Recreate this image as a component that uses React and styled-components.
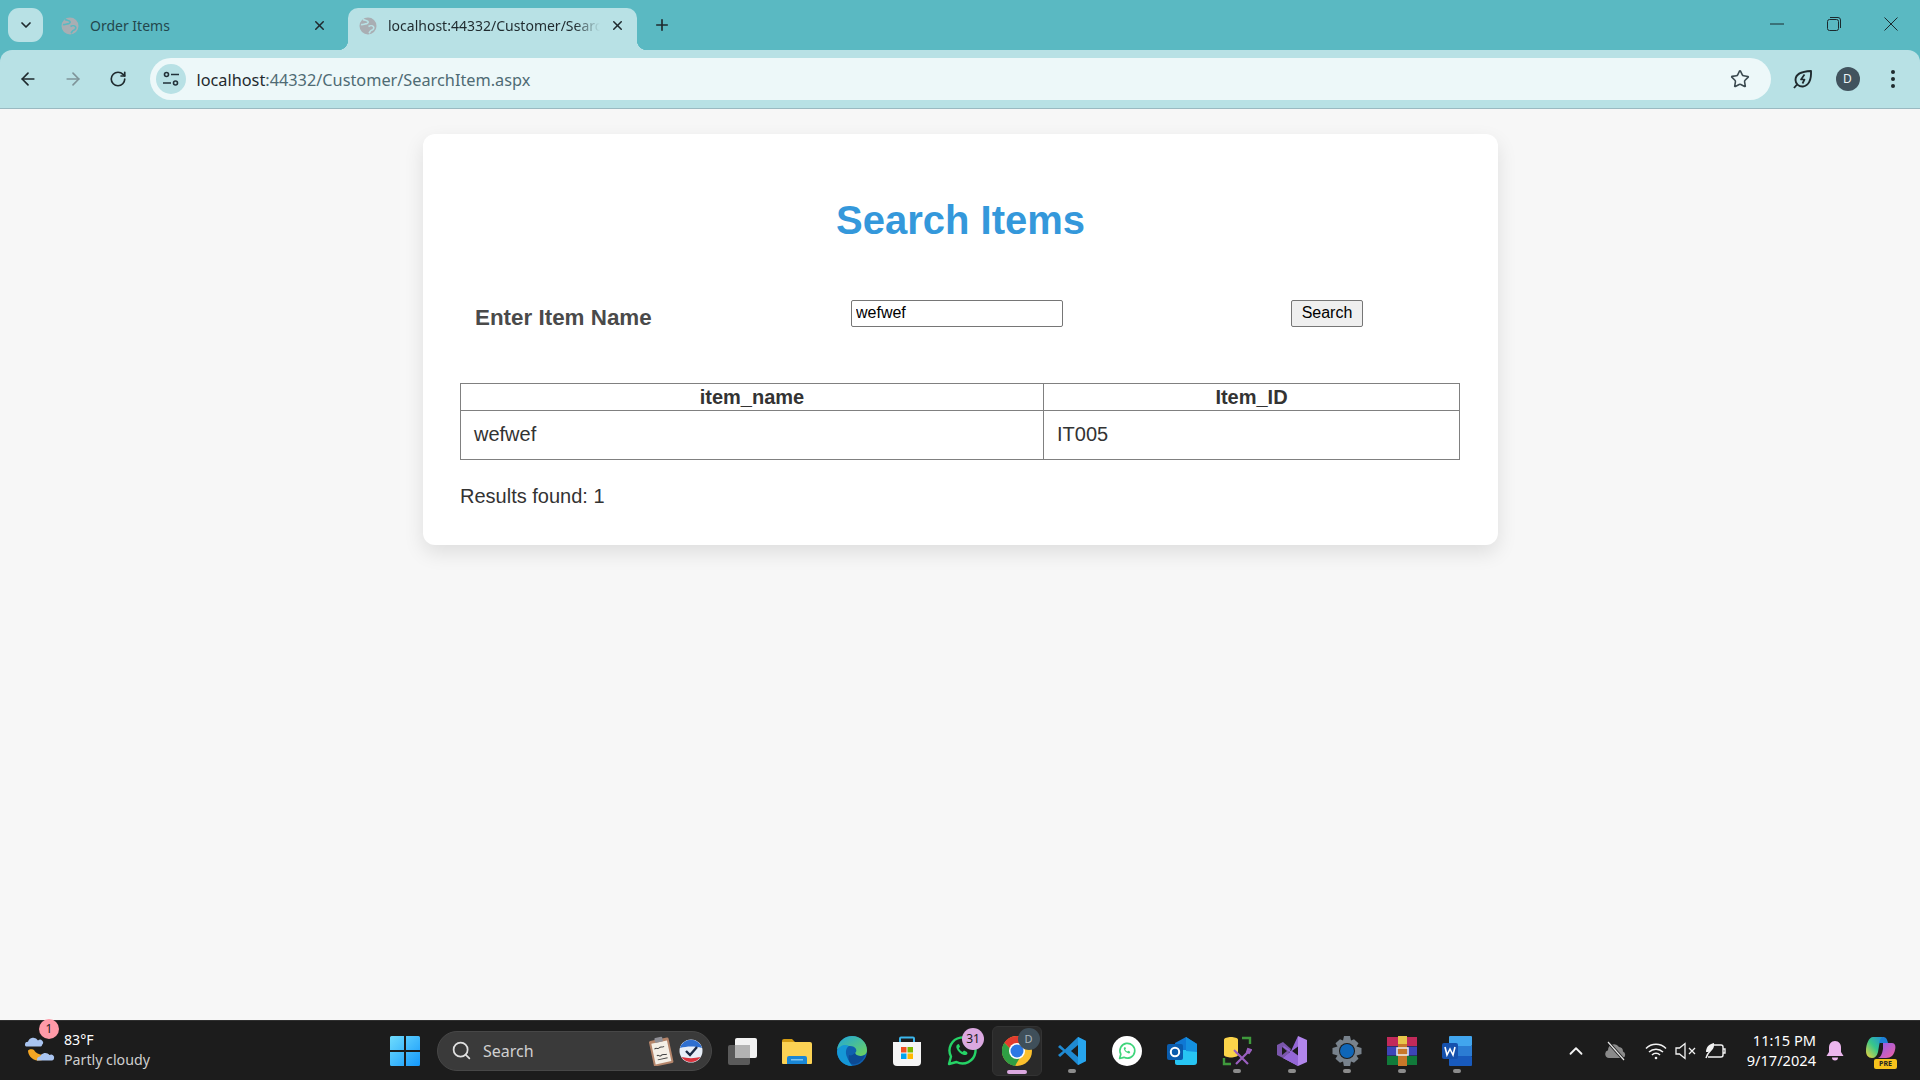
import styled, { createGlobalStyle } from "styled-components";
import { ArrowLeft, ArrowRight, RotateCw, Star, X, Plus, ChevronDown, ChevronUp, Search as SearchGlyph } from "lucide-react";

const GlobalStyle = createGlobalStyle`
    html, body {
        margin: 0;
        padding: 0;
        overflow: hidden;
    }
    * {
        box-sizing: border-box;
    }
`;

const UI_FONT = `"Noto Sans", "Open Sans", sans-serif`;

const Screen = styled.div`
    width: 1920px;
    height: 1080px;
    display: flex;
    flex-direction: column;
    background-color: #5ab9c2;
    font-family: "Liberation Sans", Arial, sans-serif;
`;

/* browser chrome */
const TabStrip = styled.div`
    height: 50px;
    display: flex;
    align-items: flex-end;
    padding-left: 8px;
    flex-shrink: 0;
`;

const TabSearch = styled.div`
    width: 35px;
    height: 34px;
    margin: 0 7px 8px 0;
    border-radius: 11px;
    background-color: #b8e1e5;
    display: flex;
    align-items: center;
    justify-content: center;
    color: #1f2a2e;
`;

const Tab = styled.div`
    position: relative;
    width: 289px;
    height: 42px;
    margin-right: 9px;
    padding: 0 11px 7px 11px;
    display: flex;
    align-items: center;
    border-radius: 10px 10px 0 0;
    background-color: ${(p) => (p.$active ? "#b8e1e5" : "transparent")};
    font-family: ${UI_FONT};
    font-size: 14px;
    color: ${(p) => (p.$active ? "#1f2a2e" : "#23474d")};

    ${(p) => p.$active && `
    &::before, &::after {
        content: "";
        position: absolute;
        bottom: 0;
        width: 10px;
        height: 10px;
    }
    &::before {
        left: -10px;
        background: radial-gradient(circle at 0 0, transparent 10px, #b8e1e5 10.5px);
    }
    &::after {
        right: -10px;
        background: radial-gradient(circle at 100% 0, transparent 10px, #b8e1e5 10.5px);
    }`}
`;

const TabTitle = styled.span`
    flex: 1;
    margin-left: 11px;
    white-space: nowrap;
    overflow: hidden;
    mask-image: ${(p) => (p.$fade ? "linear-gradient(to right, #000 88%, transparent 100%)" : "none")};
`;

const TabClose = styled.span`
    width: 18px;
    height: 18px;
    margin-left: 8px;
    display: flex;
    align-items: center;
    justify-content: center;
    color: #1f2a2e;
`;

const NewTab = styled.div`
    width: 30px;
    height: 30px;
    margin: 0 0 10px 1px;
    display: flex;
    align-items: center;
    justify-content: center;
    color: #1f2a2e;
`;

const WindowButtons = styled.div`
    margin-left: auto;
    padding-right: 1px;
    align-self: flex-start;
    display: flex;
    color: #1b2a2e;
`;

const WindowButton = styled.div`
    width: 57px;
    height: 48px;
    display: flex;
    align-items: center;
    justify-content: center;
`;

const Toolbar = styled.div`
    height: 59px;
    flex-shrink: 0;
    padding: 0 5px 1px 5.5px;
    display: flex;
    align-items: center;
    background-color: #b8e1e5;
    border-bottom: 1px solid #9ab9c1;
    border-radius: 12px 12px 0 0;
`;

const ToolButton = styled.div`
    width: 45px;
    height: 42px;
    display: flex;
    align-items: center;
    justify-content: center;
    color: ${(p) => (p.$dim ? "#7f9499" : "#1f2a2e")};
`;

const Omnibox = styled.div`
    flex: 1;
    height: 42px;
    margin: 0 9px;
    padding: 0 21px 0 6px;
    display: flex;
    align-items: center;
    border-radius: 21px;
    background-color: #edf8f9;
`;

const SiteInfo = styled.div`
    width: 30px;
    height: 30px;
    border-radius: 50%;
    background-color: #b8e1e5;
    display: flex;
    align-items: center;
    justify-content: center;
`;

const Url = styled.div`
    flex: 1;
    margin-left: 11px;
    padding-top: 2px;
    font-family: ${UI_FONT};
    font-size: 16.3px;
    color: #4f6b74;

    b {
        font-weight: 400;
        color: #1f2a2e;
    }
`;

const Avatar = styled.div`
    width: 24px;
    height: 24px;
    border-radius: 50%;
    background-color: #41535e;
    color: #eef3f5;
    font-family: ${UI_FONT};
    font-size: 12px;
    display: flex;
    align-items: center;
    justify-content: center;
`;

/* page */
const Page = styled.main`
    flex: 1;
    padding-top: 25px;
    background-color: #f7f7f7;
`;

const Card = styled.section`
    width: 1075px;
    margin-left: 423px;
    padding: 37px;
    background-color: #fff;
    border-radius: 12px;
    box-shadow: 0 8px 20px rgba(0, 0, 0, 0.1);
`;

const Title = styled.h1`
    margin: 26px 0 0;
    text-align: center;
    font-size: 40px;
    line-height: 46px;
    font-weight: 700;
    color: #3498db;
`;

const SearchForm = styled.div`
    margin-top: 57px;
    padding-left: 15px;
    display: grid;
    grid-template-columns: 376px 440px auto;
    align-items: start;
`;

const Label = styled.label`
    padding-top: 5px;
    font-size: 22.4px;
    line-height: 26px;
    font-weight: 700;
    color: #4a4a4a;
`;

const TextInput = styled.input`
    display: block;
    width: 212px;
    height: 27px;
    padding: 0 4px 2px;
    font-family: "Liberation Sans", Arial, sans-serif;
    font-size: 16px;
    color: #000;
    background: #fff;
    border: 1px solid #767676;
    border-radius: 2px;
    outline: none;
`;

const SearchButton = styled.button`
    display: block;
    width: 72px;
    height: 27px;
    padding: 0 0 2px;
    font-family: "Liberation Sans", Arial, sans-serif;
    font-size: 16px;
    color: #000;
    background-color: #efefef;
    border: 1px solid #767676;
    border-radius: 2px;
`;

const Results = styled.table`
    width: 1000px;
    margin-top: 52px;
    table-layout: fixed;
    border-collapse: collapse;
    font-size: 20px;
    color: #333;

    th, td {
        border: 1px solid #808080;
    }
    th {
        height: 27px;
        padding: 0;
        font-weight: 700;
        line-height: 23px;
    }
    td {
        height: 49px;
        padding: 0 13px 2px;
        line-height: 23px;
    }
`;

const ResultCount = styled.p`
    margin: 25px 0 0;
    font-size: 20px;
    line-height: 23px;
    color: #333;
`;

/* taskbar */
const Taskbar = styled.footer`
    height: 60px;
    flex-shrink: 0;
    display: flex;
    align-items: center;
    background-color: #1c1c1c;
    border-top: 1px solid #2f2f2f;
    font-family: ${UI_FONT};
`;

const Weather = styled.div`
    position: relative;
    width: 390px;
    padding-left: 25px;
    display: flex;
    align-items: center;
    gap: 9px;
`;

const WeatherBadge = styled.span`
    position: absolute;
    left: 39px;
    top: -13px;
    width: 20px;
    height: 20px;
    border-radius: 50%;
    background-color: #ff9aa8;
    color: #2a1c1e;
    font-size: 12px;
    line-height: 20px;
    text-align: center;
`;

const TwoLines = styled.div`
    margin-top: -2px;
    font-size: ${(p) => (p.$right ? "14.6px" : "14.2px")};
    line-height: 20px;
    color: #fff;
    white-space: nowrap;
    text-align: ${(p) => (p.$right ? "right" : "left")};
`;

const MutedLine = styled.div`
    color: #cfcfcf;
`;

const TaskSearch = styled.div`
    width: 275px;
    height: 40px;
    margin: 0 2px 0 17px;
    padding: 0 8px 0 13px;
    display: flex;
    align-items: center;
    border-radius: 20px;
    background-color: #3a3a3a;
    border: 1px solid #474747;
    color: #d0d0d0;
    font-size: 16px;

    span {
        flex: 1;
        margin-left: 11px;
    }
`;

const AppSlot = styled.div`
    position: relative;
    width: ${(p) => (p.$focused ? "50px" : "55px")};
    height: 50px;
    margin: ${(p) => (p.$focused ? "0 2.5px" : "0")};
    display: flex;
    align-items: center;
    justify-content: center;
    border-radius: 6px;
    background-color: ${(p) => (p.$focused ? "#2a2a2a" : "transparent")};
    border: 1px solid ${(p) => (p.$focused ? "#333" : "transparent")};

    ${(p) => p.$open && `
    &::after {
        content: "";
        position: absolute;
        left: 50%;
        bottom: ${p.$focused ? "1px" : "2px"};
        width: ${p.$focused ? "20px" : "8px"};
        height: 4px;
        margin-left: ${p.$focused ? "-10px" : "-4px"};
        border-radius: 2px;
        background-color: ${p.$focused ? "#dba8e0" : "#8c8c8c"};
    }`}
`;

const CountBadge = styled.span`
    position: absolute;
    top: 1px;
    right: ${(p) => (p.$dark ? "1px" : "4px")};
    width: 22px;
    height: 22px;
    border-radius: 50%;
    background-color: ${(p) => (p.$dark ? "#3f4f5a" : "#dba8e0")};
    color: ${(p) => (p.$dark ? "#aab4ba" : "#1c1c1c")};
    font-size: ${(p) => (p.$dark ? "11px" : "12px")};
    line-height: 22px;
    text-align: center;
`;

const Tray = styled.div`
    margin-left: 76px;
    display: flex;
    align-items: center;
`;

const TrayIcon = styled.div`
    width: ${(p) => p.$w}px;
    display: flex;
    align-items: center;
    justify-content: ${(p) => (p.$end ? "flex-end" : "center")};
    color: #f2f2f2;
`;

const Copilot = styled.div`
    position: relative;
    width: 30px;
    height: 30px;
    margin-left: 12px;
`;

const PreTag = styled.span`
    position: absolute;
    right: -1px;
    bottom: -3px;
    width: 23px;
    height: 10px;
    border-radius: 2px;
    background-color: #f6c21c;
    color: #222;
    font-size: 7px;
    font-weight: 700;
    line-height: 10px;
    text-align: center;
`;

function Globe({ cut }) {
    return (
        <svg width="18" height="18" viewBox="0 0 18 18">
            <circle cx="9" cy="9" r="8.5" fill="#a9aeb3" />
            <path d="M4 2.5c2 1 4 .6 5 2 .8 1.2-1 2.2-2.6 2.4C5 7.1 3.6 8 2 7.5M9.5 9.5c1.5-1 4-1 5 .2 1 1.3-.5 3.3-2 3.6-1.3.3-1.5 1.7-2.5 3" fill="none" stroke={cut} strokeWidth="1.6" />
        </svg>
    );
}

function SiteIcon() {
    return (
        <svg width="18" height="18" viewBox="0 0 18 18" fill="none" stroke="#22323a" strokeWidth="1.6">
            <circle cx="4.5" cy="4.5" r="2" />
            <path d="M9 4.5h8M1 13h8" />
            <circle cx="13.5" cy="13" r="2" />
        </svg>
    );
}

function LeafBolt() {
    return (
        <svg width="20" height="20" viewBox="0 0 20 20" fill="none" stroke="#1f2a2e" strokeWidth="1.9" strokeLinejoin="round">
            <path d="M2.5 11c0-5 4-8.5 15.5-9 .5 9-2.5 15-8 15.5-4 .3-7.5-2.5-7.5-6.5z" />
            <path d="M1 19l3-3.5" />
            <path d="M11.5 5.5L8 10.5h3.5L9.500 14.5" strokeWidth="1.7" />
        </svg>
    );
}

function Dots() {
    return (
        <svg width="6" height="20" viewBox="0 0 6 20" fill="#1f2a2e">
            <circle cx="3" cy="3" r="2" />
            <circle cx="3" cy="10" r="2" />
            <circle cx="3" cy="17" r="2" />
        </svg>
    );
}

function WeatherIcon() {
    return (
        <svg width="30" height="30" viewBox="0 0 30 30">
            <path d="M3 15c1 10 14 13 20 5 1-1 1-2 0-2-6 2-12 0-14-4-1-1-6-1-6 1z" fill="#f5a623" />
            <path d="M0 9a3 3 0 0 1 3-3.200A5.500 5.500 0 0 1 13 4.500 3 3 0 0 1 17 9c0 1-1 1.500-2 1.500H2c-1 0-2-.5-2-1.500z" fill="#a9c4f0" />
            <path d="M12 24a3 3 0 0 1 3-3.400 5.500 5.500 0 0 1 9.500-1.500 3 3 0 0 1 4.500 3.500c0 1-1 1.900-2 1.900H14c-1 0-2 .5-2-.5z" fill="#a9c4f0" />
        </svg>
    );
}

function WindowsLogo() {
    return (
        <svg width="30" height="30" viewBox="0 0 30 30">
            <defs>
                <linearGradient id="winBlue" x1="0" y1="0" x2="1" y2="1">
                    <stop offset="0" stopColor="#6fdcfd" />
                    <stop offset="1" stopColor="#1498fb" />
                </linearGradient>
            </defs>
            <path d="M0 1.5A1.5 1.5 0 0 1 1.5 0H14v14H0zM16 0h12.5A1.5 1.5 0 0 1 30 1.5V14H16zM0 16h14v14H1.5A1.5 1.5 0 0 1 0 28.500zM16 16h14v12.500a1.5 1.5 0 0 1-1.5 1.5H16z" fill="url(#winBlue)" />
        </svg>
    );
}

function Clipboard() {
    return (
        <svg width="30" height="30" viewBox="0 0 30 30">
            <g transform="translate(-1 0) rotate(-12 13 15)">
                <rect x="3" y="3" width="20" height="26" rx="1.5" fill="#b5856a" />
                <rect x="5" y="6" width="16" height="21" fill="#f4efe6" />
                <rect x="9" y="1" width="8" height="5" rx="1" fill="#8f8f96" />
                <path d="M7 12c2-2 3 1 5-.5s3 1 5-.5M8 19c2-2 2 2 4 .5s3 0 6 0M8 23h10" fill="none" stroke="#444" strokeWidth="1" />
            </g>
        </svg>
    );
}

function VoteBadge() {
    return (
        <svg width="24" height="24" viewBox="0 0 24 24">
            <circle cx="12" cy="12" r="11.5" fill="#e8eef8" />
            <path d="M1 9a11.5 11.5 0 0 1 22 0c-7-2-15-2-22 0z" fill="#2f6fd0" />
            <path d="M2.5 18a11.5 11.5 0 0 0 19 0c-6 1.5-13 1.5-19 0z" fill="#d9323c" />
            <path d="M7 12l4 4 7-8" fill="none" stroke="#1c2a44" strokeWidth="2.4" />
        </svg>
    );
}

function TaskView() {
    return (
        <svg width="30" height="30" viewBox="0 0 30 30">
            <rect x="1" y="9" width="22" height="20" rx="2" fill="#5a5a5a" />
            <rect x="8" y="2" width="22" height="20" rx="2" fill="#f2f2f2" />
            <rect x="8" y="9" width="15" height="13" fill="#b3b3b3" />
        </svg>
    );
}

function FolderIcon() {
    return (
        <svg width="30" height="30" viewBox="0 0 30 30">
            <path d="M0 5a2 2 0 0 1 2-2h8l3 3h-13z" fill="#d49c12" />
            <path d="M0 6h28a2 2 0 0 1 2 2v19a1 1 0 0 1-1 1H1a1 1 0 0 1-1-1z" fill="#fbd254" />
            <path d="M5 22a2 2 0 0 1 2-2h16a2 2 0 0 1 2 2v6H5z" fill="#1a87d6" />
            <rect x="9" y="23" width="12" height="1.5" fill="#7cc4f2" />
        </svg>
    );
}

function EdgeIcon() {
    return (
        <svg width="30" height="30" viewBox="0 0 30 30">
            <defs>
                <linearGradient id="edgeTop" x1="0" y1="0" x2="1" y2="1">
                    <stop offset="0" stopColor="#1fa6dc" />
                    <stop offset="1" stopColor="#6fd35a" />
                </linearGradient>
            </defs>
            <circle cx="15" cy="15" r="15" fill="#0f5fae" />
            <path d="M0 14C1 5 8 0 15 0c9 0 15 7 15 14 0 4-3 6-7 6-3 0-5-1-5-3 3-2 1-7-5-7C7 10 1 12 0 14z" fill="url(#edgeTop)" />
            <path d="M0 15C2 9 9 8 12 10c-3 2-4 6-2 11 1 3 4 7 5 9C6 30 0 23 0 15z" fill="#1597d6" />
            <path d="M18 17c1 3 6 4 10 2-2 6-8 10-13 9-3-1-4-5-3-9 2 1 4 0 6-2z" fill="#0c4a94" />
        </svg>
    );
}

function StoreIcon() {
    return (
        <svg width="30" height="30" viewBox="0 0 30 30">
            <path d="M8 7V2.5a1 1 0 0 1 1-1h12a1 1 0 0 1 1 1V7" fill="none" stroke="#3bb6ec" strokeWidth="2" />
            <path d="M1 6h28v20a4 4 0 0 1-4 4H5a4 4 0 0 1-4-4z" fill="#f5f5f5" />
            <rect x="9" y="11" width="5.5" height="5.5" fill="#f25022" />
            <rect x="15.5" y="11" width="5.5" height="5.5" fill="#7fba00" />
            <rect x="9" y="17.5" width="5.5" height="5.5" fill="#00a4ef" />
            <rect x="15.5" y="17.5" width="5.5" height="5.5" fill="#ffb900" />
        </svg>
    );
}

function PhonePath({ color }) {
    return <path d="M10.5 8.5c-1 .5-1.5 2-1 3.5 1 3 4 6 7.5 7 1.5.4 3-.3 3.5-1.5l-.5-1.5-3-1.5-1.5 1.5c-1.5-.7-3-2.200-3.700-3.700l1.300-1.5-1.200-2.800z" fill={color} />;
}

function WhatsAppIcon() {
    return (
        <svg width="30" height="30" viewBox="0 0 30 30">
            <path d="M2 28l2-7.5A13 13 0 1 1 9.5 26z" fill="none" stroke="#25d366" strokeWidth="2.4" strokeLinejoin="round" />
            <PhonePath color="#25d366" />
        </svg>
    );
}

function WhatsAppWhite() {
    return (
        <svg width="30" height="30" viewBox="0 0 30 30">
            <circle cx="15" cy="15" r="15" fill="#fff" />
            <g transform="translate(6.5 6.5) scale(.57)">
                <path d="M2 28l2-7.5A13 13 0 1 1 9.5 26z" fill="none" stroke="#3fd57b" strokeWidth="3" strokeLinejoin="round" />
                <PhonePath color="#3fd57b" />
            </g>
        </svg>
    );
}

function ChromeIcon() {
    return (
        <svg width="30" height="30" viewBox="0 0 30 30">
            <circle cx="15" cy="15" r="15" fill="#fbc02d" />
            <path d="M15 0a15 15 0 0 1 13 7.5H15a7.5 7.5 0 0 0-7 5L2.3 6.8A15 15 0 0 1 15 0z" fill="#e33b2e" />
            <path d="M2.3 6.8A15 15 0 0 0 13 29.9l5.6-9.4A7.5 7.5 0 0 1 8 12.5z" fill="#2f9e44" />
            <circle cx="15" cy="15" r="8" fill="#fff" />
            <circle cx="15" cy="15" r="6.5" fill="#2b78e4" />
        </svg>
    );
}

function VsCodeIcon() {
    return (
        <svg width="30" height="30" viewBox="0 0 30 30">
            <path d="M21 1l8 4v20l-8 4-13-12.5L3 21 1 19l5-4-5-4 2-2 5 4.5z" fill="#1f8ad2" />
            <path d="M21 1l8 4v20l-8 4z" fill="#27a5ee" />
            <path d="M21 9l-7 6 7 6z" fill="#1c1c1c" />
        </svg>
    );
}

function OutlookIcon() {
    return (
        <svg width="30" height="30" viewBox="0 0 30 30">
            <path d="M8 7l11-6 11 7v8H8z" fill="#0f78d4" />
            <path d="M8 14h22v12a3 3 0 0 1-3 3H10a2 2 0 0 1-2-2z" fill="#27c5f3" />
            <path d="M19 1l11 7v8l-11-1z" fill="#1490df" />
            <rect x="0" y="8" width="16" height="16" rx="2" fill="#0a5cad" />
            <circle cx="8" cy="16" r="4.2" fill="none" stroke="#fff" strokeWidth="2" />
        </svg>
    );
}

function ToolIcon() {
    return (
        <svg width="30" height="30" viewBox="0 0 30 30">
            <path d="M2 3.5C2 2 6 1 9 1s7 1 7 2.5V19c0 1.5-4 2.5-7 2.5S2 20.5 2 19z" fill="#fbd44a" />
            <path d="M20 2h8v6M2 22v6h7" fill="none" stroke="#3f9a3c" strokeWidth="2.4" />
            <path d="M14 16l12 12M27 15l-13 13" fill="none" stroke="#9a5fc0" strokeWidth="2.2" />
            <path d="M12 14l3 3M26 13l3 1-2 3-2-1z" fill="none" stroke="#9a5fc0" strokeWidth="2" />
        </svg>
    );
}

function VsIcon() {
    return (
        <svg width="30" height="30" viewBox="0 0 30 30">
            <path d="M0 9l6-3 8 7-3 5-5 4-6-3z" fill="#7a56ab" />
            <path d="M21 0l9 4v22l-9 4-15-8 15-11.5z" fill="#b286ec" />
            <path d="M21 0v30L6 22l7-6-7-5 1-1 7 5z" fill="#9467d6" />
            <path d="M5 11l5 4-5 4z" fill="#1c1c1c" />
            <path d="M21 10.5L15 15l6 4.5z" fill="#1c1c1c" />
        </svg>
    );
}

function GearIcon() {
    return (
        <svg width="30" height="30" viewBox="0 0 30 30">
            <path d="M12 0h6l1 4.5 3-1.300 4.500 4-2 3.300 5 1.500v6l-5 1.500 2 3.300-4.500 4-3-1.300-1 5h-6l-1-5-3 1.300-4.500-4 2-3.300-5-1.500v-6l5-1.500-2-3.300 4.500-4 3 1.300z" fill="#78828c" />
            <circle cx="15" cy="15" r="8" fill="#1c1c1c" />
            <circle cx="15" cy="15" r="7" fill="#0f66b8" />
        </svg>
    );
}

function RarIcon() {
    return (
        <svg width="30" height="30" viewBox="0 0 30 30">
            <rect x="0" y="1" width="30" height="9" fill="#c22a5a" />
            <rect x="0" y="10.5" width="30" height="9" fill="#3d45b8" />
            <rect x="0" y="20" width="30" height="9" fill="#117a3a" />
            <rect x="11" y="0" width="9" height="30" fill="#c8782a" />
            <rect x="11" y="0" width="9" height="8" fill="#e8c64a" />
            <rect x="10" y="12" width="11" height="7" fill="none" stroke="#eee" strokeWidth="1.5" />
        </svg>
    );
}

function WordIcon() {
    return (
        <svg width="30" height="30" viewBox="0 0 30 30">
            <rect x="7" y="0" width="23" height="10" rx="1" fill="#41a5ee" />
            <rect x="7" y="10" width="23" height="10" fill="#2b7cd3" />
            <rect x="7" y="20" width="23" height="10" rx="1" fill="#185abd" />
            <rect x="0" y="7" width="16" height="16" rx="2" fill="#1551ad" />
            <path d="M3 11l2 8 3-6 3 6 2-8" fill="none" stroke="#fff" strokeWidth="1.6" />
        </svg>
    );
}

function CloudOff() {
    return (
        <svg width="22" height="20" viewBox="0 0 22 20">
            <path d="M4 17a4 4 0 0 1-1-7.800A6 6 0 0 1 14 6a4.500 4.500 0 0 1 4 4.500 3.500 3.500 0 0 1 0 6.500z" fill="#8a8a8a" />
            <path d="M3 1l16 18" stroke="#1c1c1c" strokeWidth="3" />
            <path d="M3 1l16 18" stroke="#e8e8e8" strokeWidth="1.2" />
        </svg>
    );
}

function WifiIcon() {
    return (
        <svg width="22" height="18" viewBox="0 0 22 18" fill="none" stroke="#f2f2f2" strokeWidth="1.5">
            <path d="M1 6.5a14 14 0 0 1 20 0M4 10a10 10 0 0 1 14 0M7 13a5.5 5.5 0 0 1 8 0" />
            <circle cx="11" cy="16" r="1.3" fill="#f2f2f2" stroke="none" />
        </svg>
    );
}

function MuteIcon() {
    return (
        <svg width="22" height="18" viewBox="0 0 22 18" fill="none" stroke="#f2f2f2" strokeWidth="1.3">
            <path d="M1 6h3.5L10 1.5v15L4.5 12H1z" />
            <path d="M14 6l6 6M20 6l-6 6" />
        </svg>
    );
}

function BatteryLeaf() {
    return (
        <svg width="22" height="20" viewBox="0 0 22 20" fill="none" stroke="#f2f2f2" strokeWidth="1.4">
            <path d="M8 4h8a2 2 0 0 1 2 2v8a2 2 0 0 1-2 2H3" />
            <path d="M18 8h2v4h-2" />
            <path d="M1 11c0-5 3-8 8-9 .5 5-1.5 8-6 9z" fill="#f2f2f2" stroke="none" />
            <path d="M1 17c1-4 3-6 5-8" />
        </svg>
    );
}

function Bell() {
    return (
        <svg width="18" height="20" viewBox="0 0 18 20" fill="#ecb6ee">
            <path d="M9 0c4 0 6 3 6 6.5V11l2.5 4H.5L3 11V6.5C3 3 5 0 9 0z" />
            <path d="M6 16.5h6a3 3 0 0 1-6 0z" />
        </svg>
    );
}

function CopilotIcon() {
    return (
        <svg width="30" height="24" viewBox="0 0 30 24">
            <defs>
                <linearGradient id="copA" x1="0" y1="1" x2="1" y2="0">
                    <stop offset="0" stopColor="#f5d33a" />
                    <stop offset=".5" stopColor="#37c78a" />
                    <stop offset="1" stopColor="#1f8be0" />
                </linearGradient>
                <linearGradient id="copB" x1="0" y1="0" x2="1" y2="1">
                    <stop offset="0" stopColor="#8b5cf0" />
                    <stop offset="1" stopColor="#f060a0" />
                </linearGradient>
            </defs>
            <path d="M7 1h11c-3 1-4 4-5 9l-1 6c-1 4-3 6-6 6-4 0-6-3-6-7C0 8 3 1 7 1z" fill="url(#copA)" />
            <path d="M17 1c3 0 4 2 5 6H13c1-3 2-6 4-6z" fill="#1c7fd8" />
            <path d="M17 7h9c3 0 4 3 3 7-1 5-4 8-9 8h-8c3-1 4-4 5-9z" fill="url(#copB)" />
        </svg>
    );
}

const apps = [
    { key: "taskview", icon: <TaskView /> },
    { key: "files", icon: <FolderIcon /> },
    { key: "edge", icon: <EdgeIcon /> },
    { key: "store", icon: <StoreIcon /> },
    { key: "whatsapp", icon: <WhatsAppIcon />, badge: "31" },
    { key: "chrome", icon: <ChromeIcon />, badge: "D", dark: true, open: true, focused: true },
    { key: "vscode", icon: <VsCodeIcon />, open: true },
    { key: "whatsapp2", icon: <WhatsAppWhite /> },
    { key: "outlook", icon: <OutlookIcon /> },
    { key: "tools", icon: <ToolIcon />, open: true },
    { key: "vs", icon: <VsIcon />, open: true },
    { key: "settings", icon: <GearIcon />, open: true },
    { key: "rar", icon: <RarIcon />, open: true },
    { key: "word", icon: <WordIcon />, open: true },
];

export default function App() {
    return (
        <Screen>
            <GlobalStyle />
            <TabStrip>
                <TabSearch><ChevronDown size={16} strokeWidth={2.6} /></TabSearch>
                <Tab>
                    <Globe cut="#5ab9c2" />
                    <TabTitle>Order Items</TabTitle>
                    <TabClose><X size={15} strokeWidth={2.4} /></TabClose>
                </Tab>
                <Tab $active>
                    <Globe cut="#b8e1e5" />
                    <TabTitle $fade>localhost:44332/Customer/SearchItem.aspx</TabTitle>
                    <TabClose><X size={15} strokeWidth={2.4} /></TabClose>
                </Tab>
                <NewTab><Plus size={18} strokeWidth={2.2} /></NewTab>
                <WindowButtons>
                    <WindowButton>
                        <svg width="14" height="2" viewBox="0 0 14 2"><path d="M0 1h14" stroke="#1b2a2e" strokeWidth="1" /></svg>
                    </WindowButton>
                    <WindowButton>
                        <svg width="14" height="14" viewBox="0 0 14 14" fill="none" stroke="#1b2a2e" strokeWidth="1">
                            <rect x=".5" y="2.5" width="11" height="11" rx="2" />
                            <path d="M3 .5h8a2.5 2.5 0 0 1 2.5 2.5v8" />
                        </svg>
                    </WindowButton>
                    <WindowButton>
                        <svg width="14" height="14" viewBox="0 0 14 14"><path d="M.5.5l13 13M13.5.5l-13 13" stroke="#1b2a2e" strokeWidth="1" /></svg>
                    </WindowButton>
                </WindowButtons>
            </TabStrip>

            <Toolbar>
                <ToolButton><ArrowLeft size={20} strokeWidth={2} /></ToolButton>
                <ToolButton $dim><ArrowRight size={20} strokeWidth={2} /></ToolButton>
                <ToolButton><RotateCw size={18} strokeWidth={2.2} /></ToolButton>
                <Omnibox>
                    <SiteInfo><SiteIcon /></SiteInfo>
                    <Url><b>localhost</b>:44332/Customer/SearchItem.aspx</Url>
                    <Star size={20} strokeWidth={1.9} color="#3b4a50" />
                </Omnibox>
                <ToolButton><LeafBolt /></ToolButton>
                <ToolButton><Avatar>D</Avatar></ToolButton>
                <ToolButton><Dots /></ToolButton>
            </Toolbar>

            <Page>
                <Card>
                    <Title>Search Items</Title>
                    <SearchForm>
                        <Label>Enter Item Name</Label>
                        <div><TextInput defaultValue="wefwef" /></div>
                        <div><SearchButton>Search</SearchButton></div>
                    </SearchForm>
                    <Results>
                        <colgroup>
                            <col width="583" />
                            <col />
                        </colgroup>
                        <thead>
                            <tr>
                                <th>item_name</th>
                                <th>Item_ID</th>
                            </tr>
                        </thead>
                        <tbody>
                            <tr>
                                <td>wefwef</td>
                                <td>IT005</td>
                            </tr>
                        </tbody>
                    </Results>
                    <ResultCount>Results found: 1</ResultCount>
                </Card>
            </Page>

            <Taskbar>
                <Weather>
                    <WeatherIcon />
                    <WeatherBadge>1</WeatherBadge>
                    <TwoLines>
                        <div>83°F</div>
                        <MutedLine>Partly cloudy</MutedLine>
                    </TwoLines>
                </Weather>
                <WindowsLogo />
                <TaskSearch>
                    <SearchGlyph size={21} strokeWidth={2} color="#e0e0e0" />
                    <span>Search</span>
                    <Clipboard />
                    <VoteBadge />
                </TaskSearch>
                {apps.map((app) => (
                    <AppSlot key={app.key} $open={app.open} $focused={app.focused}>
                        {app.icon}
                        {app.badge && <CountBadge $dark={app.dark}>{app.badge}</CountBadge>}
                    </AppSlot>
                ))}
                <Tray>
                    <TrayIcon $w={32}><ChevronUp size={22} strokeWidth={2} /></TrayIcon>
                    <TrayIcon $w={48}><CloudOff /></TrayIcon>
                    <TrayIcon $w={32}><WifiIcon /></TrayIcon>
                    <TrayIcon $w={28}><MuteIcon /></TrayIcon>
                    <TrayIcon $w={32}><BatteryLeaf /></TrayIcon>
                    <TrayIcon $w={84} $end>
                        <TwoLines $right>
                            <div>11:15 PM</div>
                            <div>9/17/2024</div>
                        </TwoLines>
                    </TrayIcon>
                    <TrayIcon $w={38}><Bell /></TrayIcon>
                    <Copilot>
                        <CopilotIcon />
                        <PreTag>PRE</PreTag>
                    </Copilot>
                </Tray>
            </Taskbar>
        </Screen>
    );
}
